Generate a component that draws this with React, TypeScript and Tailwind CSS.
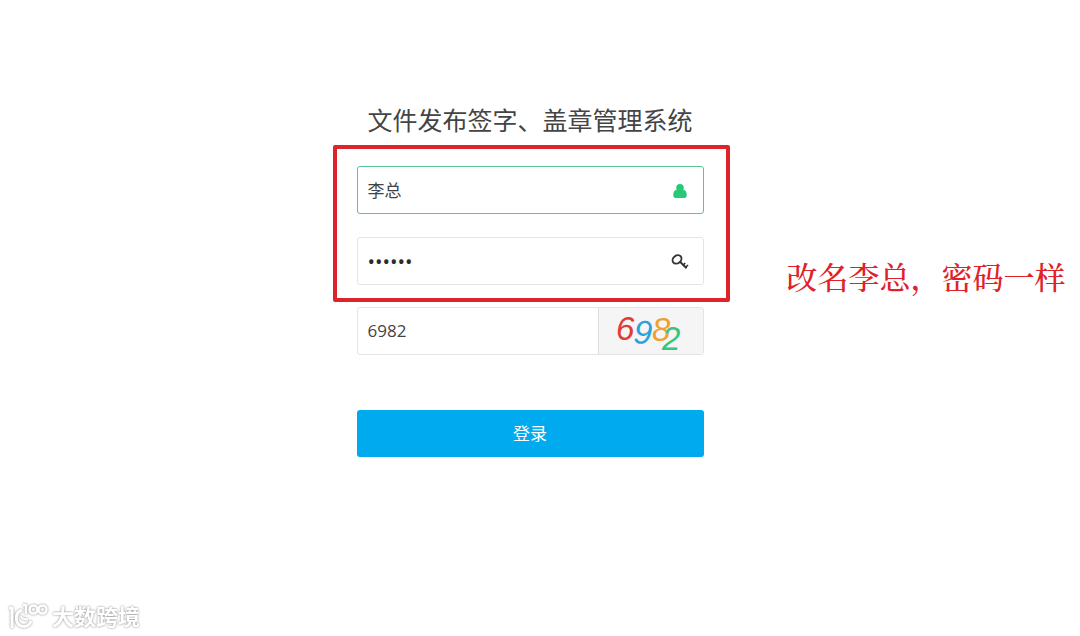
import { useState } from 'react'

const captchaDigits = [
    { char: '6', x: 17, y: 32, rotate: 0, color: '#e23a34' },
    { char: '9', x: 34, y: 35, rotate: 4, color: '#2b9fdf' },
    { char: '8', x: 53, y: 33, rotate: 0, color: '#f0a02e' },
    { char: '2', x: 63, y: 42, rotate: 0, color: '#3cc47c' },
]

function UserIcon() {
    return (
        <svg viewBox="0 0 14 14" className="h-[14px] w-[14px]" fill="currentColor" aria-hidden="true">
            <circle cx="7" cy="3.8" r="3.8" />
            <path d="M3.6 5.8Q7 8.400 10.400 5.8Q13.8 6.400 13.8 11.6Q13.8 14 11.6 14H2.400Q0.200 14 0.200 11.6Q0.200 6.400 3.6 5.8Z" />
        </svg>
    )
}

function KeyIcon() {
    return (
        <svg viewBox="0 0 18 16" className="h-4 w-[18px]" fill="none" stroke="currentColor" aria-hidden="true">
            <ellipse cx="6" cy="5.4" rx="4.8" ry="3.8" strokeWidth="1.9" transform="rotate(-38 6 5.4)" />
            <path d="M9 7.8L15.6 14.2" strokeWidth="1.9" />
            <path d="M11.8 11.6L14.2 9M14.2 13.8L17 11" strokeWidth="1.6" />
        </svg>
    )
}

function Captcha() {
    return (
        <button type="button" aria-label="6982" className="w-[105px] shrink-0 rounded-r-[3px] border-l border-[#dedede] bg-[#f5f5f5]">
            <svg viewBox="0 0 104 46" className="h-[46px] w-full overflow-visible" fontFamily="Liberation Sans, Arial, sans-serif" fontStyle="italic" fontSize="33">
                {captchaDigits.map(d => (
                    <text key={d.char} x={d.x} y={d.y} fill={d.color} transform={`rotate(${d.rotate} ${d.x} ${d.y})`}>
                        {d.char}
                    </text>
                ))}
            </svg>
        </button>
    )
}

function Watermark() {
    return (
        <footer className="flex items-center gap-1 px-2 pb-1 text-white">
            <svg viewBox="0 0 40 32" className="h-8 w-10 drop-shadow-[0_0_1px_#888]" fill="none" stroke="currentColor" strokeWidth="3" strokeLinejoin="round" aria-hidden="true">
                <path d="M1 8H4V28" />
                <path d="M14 10Q7 13 8.500 20Q10 26.500 16 26.500Q21 26.500 23 21" />
                <path d="M13 16Q14 20 20 19" strokeWidth="2" />
                <path d="M15 5H18V14" strokeWidth="2.500" />
                <circle cx="25.500" cy="9.500" r="4" strokeWidth="2.500" />
                <circle cx="34.500" cy="9.500" r="4" strokeWidth="2.500" />
            </svg>
            <span className="text-[22px] leading-8 font-bold drop-shadow-[0_0_1px_#888]">大数跨境</span>
        </footer>
    )
}

export default function App() {
    const [username, setUsername] = useState('李总')
    const [password, setPassword] = useState('123456')
    const [code, setCode] = useState('6982')

    return (
        <div className="flex min-h-screen flex-col overflow-x-hidden bg-white font-['Open_Sans','Noto_Sans_CJK_SC',sans-serif] text-[#444]">
            <main className="flex grow justify-center pt-[101px] pr-5">
                <form className="w-full max-w-[347px]" onSubmit={e => e.preventDefault()}>
                    <h1 className="mb-[29px] text-center font-['Noto_Sans_CJK_SC',sans-serif] text-[25px] leading-9 whitespace-nowrap">文件发布签字、盖章管理系统</h1>

                    <div className="relative flex flex-col gap-[23px]">
                        <label className="flex h-12 items-center rounded-[3px] border border-[#5cc596] pt-0.5 pr-4 pl-[10px]">
                            <input
                                type="text"
                                aria-label="用户名"
                                className="min-w-0 grow text-[17px] outline-none"
                                value={username}
                                onChange={e => setUsername(e.target.value)}
                            />
                            <span className="text-[#27c878]"><UserIcon /></span>
                        </label>
                        <label className="flex h-12 items-center rounded-[3px] border border-[#e4e4e4] pt-0.5 pr-[14px] pl-[10px]">
                            <input
                                type="password"
                                aria-label="密码"
                                className="min-w-0 grow text-[20px] text-[#2b2b2b] outline-none"
                                value={password}
                                onChange={e => setPassword(e.target.value)}
                            />
                            <span className="text-[#333]"><KeyIcon /></span>
                        </label>

                        {/* highlight frame and note */}
                        <div className="pointer-events-none absolute -top-[21px] -right-[26px] -bottom-[17px] -left-6 rounded-[2px] border-4 border-[#de242b]" />
                        <p className="absolute top-[90px] left-[430px] font-['Noto_Serif_CJK_SC','Noto_Sans_CJK_SC',serif] text-[31px] leading-10 font-medium whitespace-nowrap text-[#e02127]">
                            改名李总，密码一样
                        </p>
                    </div>

                    <div className="mt-[22px] flex h-12 rounded-[3px] border border-[#e4e4e4]">
                        <input
                            type="text"
                            aria-label="验证码"
                            className="min-w-0 grow pl-[10px] text-[17px] outline-none"
                            value={code}
                            onChange={e => setCode(e.target.value)}
                        />
                        <Captcha />
                    </div>

                    <button type="submit" className="mt-[55px] h-[47px] w-full rounded-[3px] bg-[#00aaef] text-[17px] text-white">
                        登录
                    </button>
                </form>
            </main>
            <Watermark />
        </div>
    )
}
